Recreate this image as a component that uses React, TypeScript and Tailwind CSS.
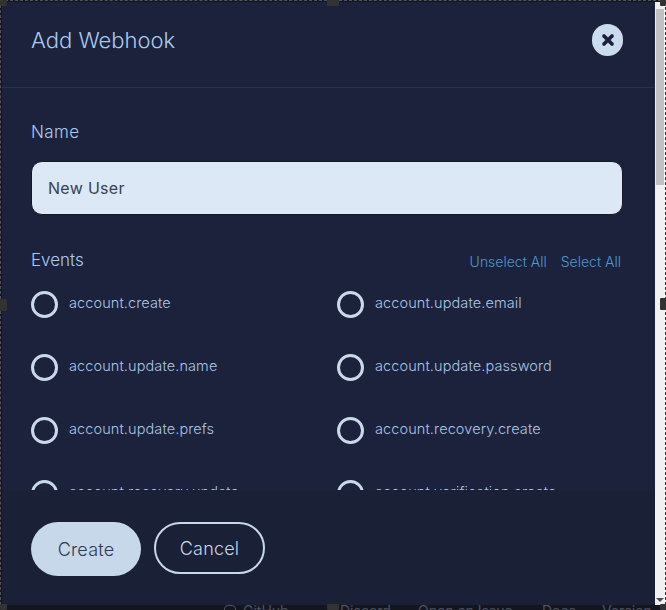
import { X } from "lucide-react";

const events = [
  "account.create",
  "account.update.email",
  "account.update.name",
  "account.update.password",
  "account.update.prefs",
  "account.recovery.create",
  "account.recovery.update",
  "account.verification.create",
];

const Handle = ({ className }: { className: string }) => (
  <span className={`absolute rounded-[1px] bg-[#333333] ${className}`} />
);

const App = () => {
  return (
    <div className="relative w-[666px] h-[610px] overflow-hidden bg-[#14161f] flex flex-col font-['Inter',sans-serif]">
      <div className="flex flex-1 min-h-0 pt-px pl-px border-t border-l border-dashed border-[#555555]">
        <div className="flex-1 min-w-0 flex flex-col bg-[#1c223b]">
          <div className="h-[86px] shrink-0 flex items-start justify-between pt-[22px] pl-[29px] pr-[32px] border-b border-[#263250]">
            <h2 className="text-[22px] leading-[32px] font-light text-[#a9cbf2]">Add Webhook</h2>
            <button className="w-[31px] h-[32px] rounded-full bg-[#cbdcee] flex items-center justify-center">
              <X size={16} strokeWidth={5.5} className="text-[#1c223b]" />
            </button>
          </div>
          <div className="flex-1 min-h-0 overflow-hidden pl-[29px] pr-[32px]">
            <label className="block mt-[33px] text-[17px] tracking-[0.4px] font-light leading-[22px] text-[#a9cbf2]">Name</label>
            <div className="mt-[18px] h-[54px] rounded-[11px] border border-[#141826] bg-[#dce8f5] flex items-center pl-[16px] text-[16px] tracking-[0.3px] text-[#3a4150]">
              New User
            </div>
            <div className="mt-[35px] flex items-center justify-between h-[22px]">
              <span className="text-[17px] font-light text-[#a9cbf2]">Events</span>
              <div className="flex gap-[14px] text-[14px] font-light text-[#4a9ad4] pr-[2px] pt-[1px]">
                <span>Unselect All</span>
                <span>Select All</span>
              </div>
            </div>
            <div className="mt-[19px] grid grid-cols-[306px_1fr] gap-y-[36px]">
              {events.map((name) => (
                <div key={name} className="flex items-center gap-[11px] h-[27px]">
                  <span className="w-[27px] h-[27px] shrink-0 rounded-full border-[3px] border-[#c9d9ea]" />
                  <span className="text-[14.5px] tracking-[0.1px] font-light text-[#a9c6ea] -mt-[4px]">{name}</span>
                </div>
              ))}
            </div>
          </div>
          <div className="h-[115px] shrink-0 bg-[#1a2036] flex items-start gap-[13px] pl-[29px] pt-[32px]">
            <button className="w-[110px] h-[54px] rounded-full bg-[#c7d8ea] text-[18px] tracking-[0.2px] font-light text-[#2f3850]">Create</button>
            <button className="w-[111px] h-[52px] rounded-full border-2 border-[#c7d8ea] text-[18px] tracking-[0.2px] font-light text-[#c7d8ea]">Cancel</button>
          </div>
        </div>
        <div className="w-[11px] shrink-0 bg-[#f1f1f1] flex flex-col border-r border-dashed border-[#333333] items-center">
          <div className="h-[7px] shrink-0" />
          <div className="w-[8px] h-[176px] bg-[#c1c1c1]" />
          <div className="flex-1" />
          <div className="w-0 h-0 mb-[3px] border-x-[4px] border-x-transparent border-t-[4px] border-t-[#505050]" />
        </div>
      </div>
      <div className="h-[5px] shrink-0 overflow-hidden flex pl-[224px] text-[14px] leading-[12px] text-[#4d515c] whitespace-nowrap">
        <span className="w-[12px] h-[12px] mr-[7px] rounded-sm border border-[#4d515c]" />
        <span className="w-[97px]">GitHub</span>
        <span className="w-[78px]">Discord</span>
        <span className="w-[124px]">Open an Issue</span>
        <span className="w-[60px]">Docs</span>
        <span>Version</span>
      </div>
      <Handle className="left-0 top-0 w-[7px] h-[6px]" />
      <Handle className="left-[327px] top-0 w-[12px] h-[6px]" />
      <Handle className="right-0 top-0 w-[6px] h-[6px]" />
      <Handle className="left-0 top-[299px] w-[7px] h-[12px]" />
      <Handle className="right-0 top-[298px] w-[6px] h-[12px]" />
      <Handle className="left-0 bottom-0 w-[7px] h-[6px]" />
      <Handle className="left-[327px] bottom-0 w-[12px] h-[6px]" />
      <Handle className="right-0 bottom-0 w-[6px] h-[6px]" />
    </div>
  );
};

export default App;
